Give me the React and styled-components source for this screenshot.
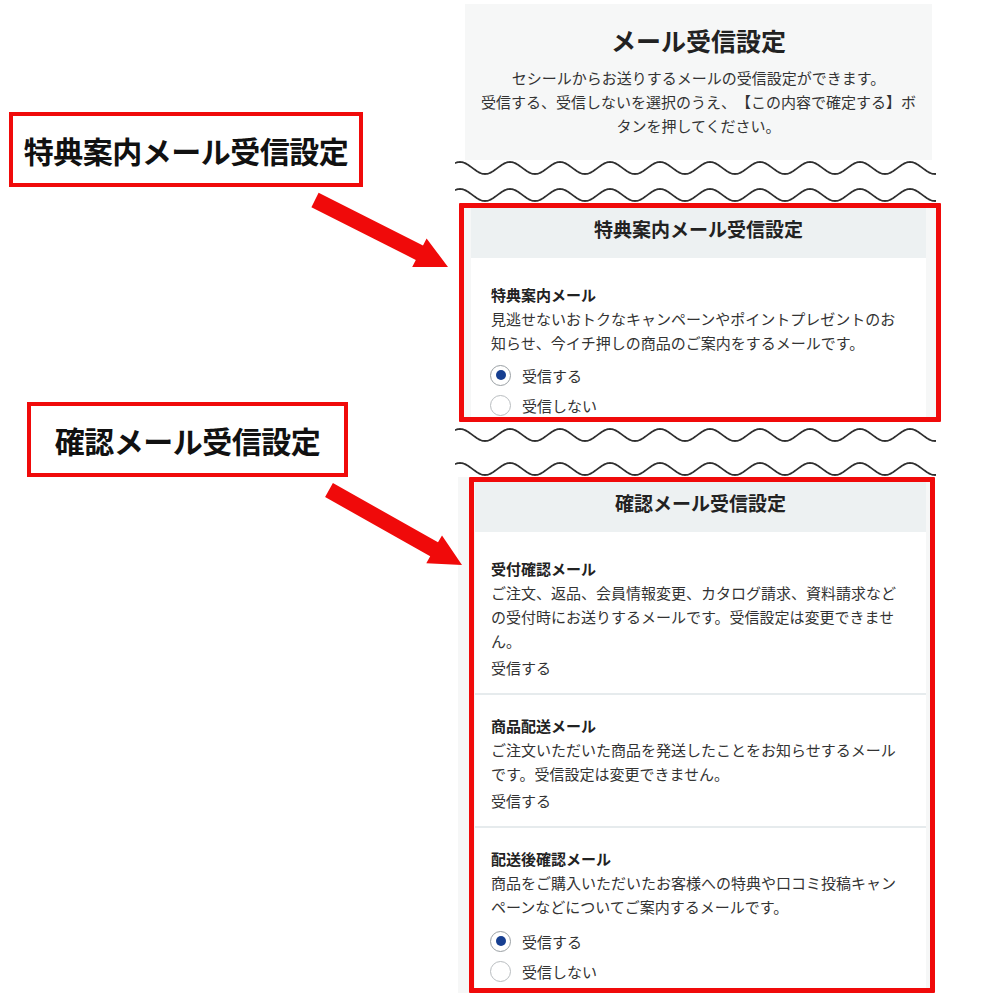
import React from "react";
import styled, { createGlobalStyle } from "styled-components";

const GlobalStyle = createGlobalStyle`
  html, body {
    margin: 0;
    padding: 0;
    background: #fff;
  }
  body {
    font-family: "Noto Sans CJK JP", "Noto Sans", sans-serif;
    color: #333;
    text-spacing-trim: space-all;
  }
`;

const RED = "#f00a0a";
const PANEL = "#f6f7f7";

const Page = styled.div`
  position: relative;
  width: 1000px;
  height: 1000px;
  display: grid;
  grid-template-columns: 465px 467px;
  overflow: hidden;
`;

const Notes = styled.div`
  display: flex;
  flex-direction: column;
  align-items: flex-start;
  padding-top: 112px;
`;

const Callout = styled.div`
  box-sizing: border-box;
  width: ${(p) => p.$width}px;
  height: 75px;
  margin-left: ${(p) => p.$left}px;
  margin-top: ${(p) => p.$top || 0}px;
  border: 4px solid ${RED};
  display: flex;
  align-items: center;
  justify-content: center;
  font-size: 30px;
  font-weight: 700;
  color: #111;
  letter-spacing: -0.5px;
`;

const Screen = styled.div`
  display: flex;
  flex-direction: column;
  padding-top: 4px;
`;

const Intro = styled.div`
  background: ${PANEL};
  padding: 20px 8px 22px;
  text-align: center;
`;

const Title = styled.h1`
  margin: 0;
  font-size: 25px;
  line-height: 32px;
  font-weight: 700;
  color: #222;
`;

const Lead = styled.p`
  margin: 10px 0 0;
  font-size: 15px;
  line-height: 24px;
  white-space: nowrap;
`;

const WaveSvg = styled.svg`
  display: block;
  margin: ${(p) => p.$top || 0}px -6px 0 -10px;
  width: 483px;
  height: 16px;
  flex: none;
`;

const Highlight = styled.div`
  box-sizing: border-box;
  height: ${(p) => p.$height}px;
  margin: 0 ${(p) => p.$right}px 0 ${(p) => p.$left}px;
  padding: 0 ${(p) => p.$padRight}px 0 ${(p) => p.$padLeft}px;
  border: 5px solid ${RED};
  border-radius: 1px;
  background: ${PANEL};
  overflow: hidden;
  flex: none;
`;

const Backdrop = styled.div`
  background: ${PANEL};
  margin-left: -7px;
  padding-left: 11px;
`;

const Card = styled.section`
  background: #fff;
`;

const CardHead = styled.h2`
  margin: 0;
  padding: 10px 0 18px;
  background: #edf1f2;
  font-size: 19px;
  line-height: 22px;
  font-weight: 700;
  text-align: center;
  color: #222;
`;

const Item = styled.div`
  padding: ${(p) => (p.$first ? 27 : 21)}px ${(p) => p.$inset}px 13px;
  border-top: ${(p) => (p.$first ? "none" : "2px solid #e6ebed")};
`;

const ItemTitle = styled.h3`
  margin: 0;
  font-size: 15px;
  line-height: 20px;
  font-weight: 700;
  color: #222;
`;

const ItemText = styled.p`
  margin: 2px 0 0;
  font-size: 15px;
  line-height: 24px;
`;

const Fixed = styled.div`
  margin-top: 3px;
  font-size: 15px;
  line-height: 24px;
`;

const Choices = styled.div`
  margin-top: ${(p) => p.$top}px;
  display: flex;
  flex-direction: column;
`;

const Choice = styled.label`
  display: flex;
  align-items: center;
  gap: 11px;
  height: 30px;
  font-size: 15px;
  color: #333;
  margin-left: -1px;
`;

const Dot = styled.span`
  box-sizing: border-box;
  width: 21px;
  height: 21px;
  border-radius: 50%;
  border: 1.5px solid ${(p) => (p.$on ? "#9aa0a4" : "#b9bdc0")};
  background: #fff;
  display: flex;
  align-items: center;
  justify-content: center;
  flex: none;

  &::after {
    content: "";
    width: 10px;
    height: 10px;
    border-radius: 50%;
    background: ${(p) => (p.$on ? "#173f91" : "transparent")};
  }
`;

const Overlay = styled.svg`
  position: absolute;
  left: 0;
  top: 0;
  width: 1000px;
  height: 1000px;
  pointer-events: none;
`;

function wavePath(width, period = 50, amp = 6, phase = 5, mid = 8) {
  let d = "";
  for (let x = 0; x <= width; x += 1) {
    const y = mid - amp * Math.cos((2 * Math.PI * (x - phase)) / period);
    d += `${x === 0 ? "M" : "L"}${x} ${y.toFixed(2)} `;
  }
  return d;
}

const WAVE = wavePath(481);

function Wave({ top }) {
  return (
    <WaveSvg $top={top} viewBox="0 0 483 16">
      <path d={WAVE} fill="none" stroke="#2f2f2f" strokeWidth="1.8" />
    </WaveSvg>
  );
}

function Radios({ top }) {
  return (
    <Choices $top={top}>
      <Choice>
        <Dot $on />
        受信する
      </Choice>
      <Choice>
        <Dot />
        受信しない
      </Choice>
    </Choices>
  );
}

export default function App() {
  return (
    <>
      <GlobalStyle />
      <Page>
        <Notes>
          <Callout $width={354} $left={9}>
            特典案内メール受信設定
          </Callout>
          <Callout $width={321} $left={27} $top={215}>
            確認メール受信設定
          </Callout>
        </Notes>

        <Screen>
          <Intro>
            <Title>メール受信設定</Title>
            <Lead>
              セシールからお送りするメールの受信設定ができます。
              <br />
              受信する、受信しないを選択のうえ、【この内容で確定する】ボ
              <br />
              タンを押してください。
            </Lead>
          </Intro>
          <Wave />
          <Wave top={11} />

          <Highlight $height={219} $left={-6} $right={-9} $padLeft={7} $padRight={10}>
            <Card>
              <CardHead>特典案内メール受信設定</CardHead>
              <Item $first $inset={20}>
                <ItemTitle>特典案内メール</ItemTitle>
                <ItemText>
                  見逃せないおトクなキャンペーンやポイントプレゼントのお知らせ、今イチ押しの商品のご案内をするメールです。
                </ItemText>
                <Radios top={5} />
              </Item>
            </Card>
          </Highlight>

          <Wave top={5} />
          <Wave top={18} />

          <Backdrop>
            <Highlight $height={516} $left={0} $right={-3} $padLeft={1} $padRight={4}>
              <Card>
                <CardHead>確認メール受信設定</CardHead>
                <Item $first $inset={16}>
                  <ItemTitle>受付確認メール</ItemTitle>
                  <ItemText>
                    ご注文、返品、会員情報変更、カタログ請求、資料請求などの受付時にお送りするメールです。受信設定は変更できません。
                  </ItemText>
                  <Fixed>受信する</Fixed>
                </Item>
                <Item $inset={16}>
                  <ItemTitle>商品配送メール</ItemTitle>
                  <ItemText>
                    ご注文いただいた商品を発送したことをお知らせするメールです。受信設定は変更できません。
                  </ItemText>
                  <Fixed>受信する</Fixed>
                </Item>
                <Item $inset={16}>
                  <ItemTitle>配送後確認メール</ItemTitle>
                  <ItemText>
                    商品をご購入いただいたお客様への特典や口コミ投稿キャンペーンなどについてご案内するメールです。
                  </ItemText>
                  <Radios top={7} />
                </Item>
              </Card>
            </Highlight>
          </Backdrop>
        </Screen>

        <Overlay viewBox="0 0 1000 1000">
          <polygon
            fill={RED}
            points="311.4,207.2 318.6,192.8 423,245.5 426.6,238.4 448,267 412.2,267 415.8,259.9"
          />
          <polygon
            fill={RED}
            points="325.1,497 332.9,483 438,542.3 442,535.4 462,565 426.3,563.2 430.2,556.3"
          />
        </Overlay>
      </Page>
    </>
  );
}
